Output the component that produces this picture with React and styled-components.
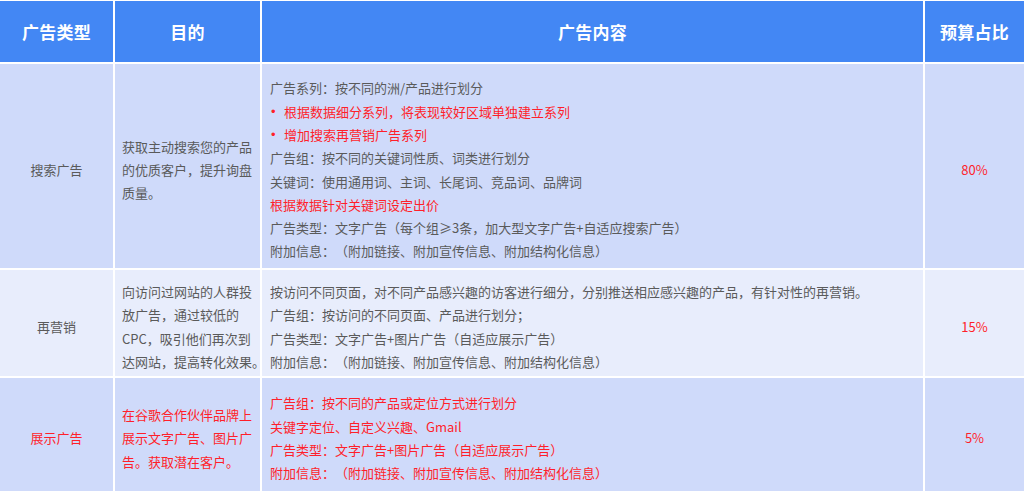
import React from "react";
import styled, { createGlobalStyle } from "styled-components";

const Global = createGlobalStyle`
  html, body {
    margin: 0;
    padding: 0;
    background: #ffffff;
  }
  body {
    font-family: "Noto Sans CJK SC", "Noto Sans", "Liberation Sans", sans-serif;
    text-spacing-trim: space-all;
  }
`;

const Page = styled.div`
  width: 1024px;
  padding-top: 1px;
  box-sizing: border-box;
`;

const Table = styled.div`
  display: flex;
  flex-direction: column;
  gap: 2px;
`;

const Row = styled.div`
  display: grid;
  grid-template-columns: 113px 145px 661px 99px;
  column-gap: 2px;
  height: ${(p) => p.$h}px;
`;

const HeadCell = styled.div`
  background: #4387f4;
  color: #ffffff;
  font-size: 17px;
  font-weight: 700;
  display: flex;
  align-items: center;
  justify-content: center;
  letter-spacing: 0.2px;
`;

const Cell = styled.div`
  background: ${(p) => (p.$alt ? "#e8edfc" : "#cfdafa")};
  color: ${(p) => (p.$red ? "#ff1f2a" : "#5a5a5a")};
  font-size: 13px;
  line-height: 23.3px;
  display: flex;
  flex-direction: column;
  justify-content: center;
  align-items: ${(p) => (p.$center ? "center" : "flex-start")};
  padding: 7px ${(p) => p.$px || 0}px 0 ${(p) => p.$px || 0}px;
  box-sizing: border-box;
  white-space: nowrap;
  overflow: visible;
  text-spacing-trim: space-all;
`;

const Line = styled.div`
  color: ${(p) => (p.$red ? "#ff1f2a" : "inherit")};
`;

const BulletLine = styled.div`
  display: flex;
  color: #ff1f2a;
`;

const Dot = styled.span`
  width: 14px;
  padding-left: 1px;
  box-sizing: border-box;
  flex: none;
  font-family: "Liberation Sans", sans-serif;
  font-size: 13px;
`;

const rows = [
  {
    h: 204,
    alt: false,
    red: false,
    type: "搜索广告",
    purpose: ["获取主动搜索您的产品", "的优质客户，提升询盘", "质量。"],
    content: [
      { t: "广告系列：按不同的洲/产品进行划分" },
      { t: "根据数据细分系列，将表现较好区域单独建立系列", bullet: true },
      { t: "增加搜索再营销广告系列", bullet: true },
      { t: "广告组：按不同的关键词性质、词类进行划分" },
      { t: "关键词：使用通用词、主词、长尾词、竞品词、品牌词" },
      { t: "根据数据针对关键词设定出价", red: true },
      { t: "广告类型：文字广告（每个组≥3条，加大型文字广告+自适应搜索广告）" },
      { t: "附加信息：（附加链接、附加宣传信息、附加结构化信息）" },
    ],
    pct: "80%",
  },
  {
    h: 106,
    alt: true,
    red: false,
    type: "再营销",
    purpose: ["向访问过网站的人群投", "放广告，通过较低的", "CPC，吸引他们再次到", "达网站，提高转化效果。"],
    content: [
      { t: "按访问不同页面，对不同产品感兴趣的访客进行细分，分别推送相应感兴趣的产品，有针对性的再营销。" },
      { t: "广告组：按访问的不同页面、产品进行划分；" },
      { t: "广告类型：文字广告+图片广告（自适应展示广告）" },
      { t: "附加信息：（附加链接、附加宣传信息、附加结构化信息）" },
    ],
    pct: "15%",
  },
  {
    h: 113,
    alt: false,
    red: true,
    type: "展示广告",
    purpose: ["在谷歌合作伙伴品牌上", "展示文字广告、图片广", "告。获取潜在客户。"],
    content: [
      { t: "广告组：按不同的产品或定位方式进行划分" },
      { t: "关键字定位、自定义兴趣、Gmail" },
      { t: "广告类型：文字广告+图片广告（自适应展示广告）" },
      { t: "附加信息：（附加链接、附加宣传信息、附加结构化信息）" },
    ],
    pct: "5%",
  },
];

export default function App() {
  return (
    <Page>
      <Global />
      <Table>
        <Row $h={61}>
          <HeadCell>广告类型</HeadCell>
          <HeadCell>目的</HeadCell>
          <HeadCell>广告内容</HeadCell>
          <HeadCell>预算占比</HeadCell>
        </Row>
        {rows.map((r) => (
          <Row key={r.type} $h={r.h}>
            <Cell $alt={r.alt} $red={r.red} $center>
              {r.type}
            </Cell>
            <Cell $alt={r.alt} $red={r.red} $px={7}>
              {r.purpose.map((l) => (
                <Line key={l}>{l}</Line>
              ))}
            </Cell>
            <Cell $alt={r.alt} $red={r.red} $px={8}>
              {r.content.map((c) =>
                c.bullet ? (
                  <BulletLine key={c.t}>
                    <Dot>•</Dot>
                    <span>{c.t}</span>
                  </BulletLine>
                ) : (
                  <Line key={c.t} $red={c.red}>
                    {c.t}
                  </Line>
                )
              )}
            </Cell>
            <Cell $alt={r.alt} $red $center>
              {r.pct}
            </Cell>
          </Row>
        ))}
      </Table>
    </Page>
  );
}
